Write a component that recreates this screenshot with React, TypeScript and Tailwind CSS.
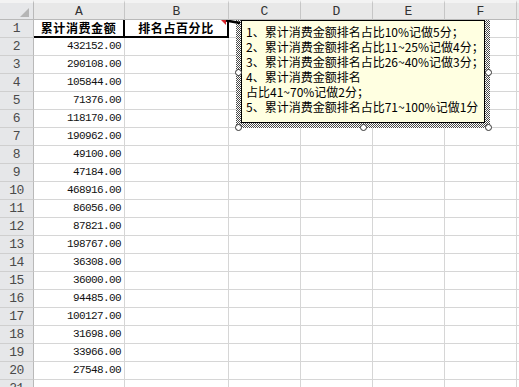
import React from "react";

const nums = [
  "432152.00",
  "290108.00",
  "105844.00",
  "71376.00",
  "118170.00",
  "190962.00",
  "49100.00",
  "47184.00",
  "468916.00",
  "86056.00",
  "87821.00",
  "198767.00",
  "36308.00",
  "36000.00",
  "94485.00",
  "100127.00",
  "31698.00",
  "33966.00",
  "27548.00",
];

const lines = [
  "1、累计消费金额排名占比10%记做5分；",
  "2、累计消费金额排名占比11~25%记做4分；",
  "3、累计消费金额排名占比26~40%记做3分；",
  "4、累计消费金额排名",
  "占比41~70%记做2分；",
  "5、累计消费金额排名占比71~100%记做1分",
];

const colLetters = ["A", "B", "C", "D", "E", "F", ""];

function RowHead({ n }: { n: number }) {
  return (
    <div className="flex items-center justify-center border-r border-b border-r-[#b9b9b9] border-b-[#cfcfcf] bg-[#e6e7e9] font-['Liberation_Mono',monospace] text-[13px] text-[#4a4a4a] tracking-[-0.5px]">
      {n}
    </div>
  );
}

function Cell({ children }: { children?: React.ReactNode }) {
  return (
    <div className="flex items-center justify-end border-r border-b border-[#d6d6d6] pr-[3px] font-['Liberation_Mono',monospace] text-[11px] tracking-[-0.6px] text-[#111]">
      {children}
    </div>
  );
}

export default function App() {
  const rows = [];
  for (let r = 2; r <= 21; r++) {
    rows.push(
      <React.Fragment key={r}>
        <RowHead n={r} />
        <Cell>{nums[r - 2]}</Cell>
        <Cell />
        <Cell />
        <Cell />
        <Cell />
        <Cell />
        <Cell />
      </React.Fragment>
    );
  }

  return (
    <div className="relative h-[387px] w-[519px] overflow-hidden bg-white">
      <div className="grid grid-cols-[34px_91px_104px_72px_72px_72px_72px_72px] grid-rows-[20px_repeat(21,18px)]">
        {/* corner */}
        <div className="relative z-10 border-r border-b border-r-[#b9b9b9] border-b-[#b9b9b9] bg-[#e6e7e9] border-t-[3px] border-t-[#f3f3f3]">
          <svg className="absolute left-0 top-0" width="34" height="17" viewBox="0 0 34 17">
            <polygon points="29,5 29,14 20,14" fill="#b5b5b5" />
          </svg>
        </div>
        {colLetters.map((c, i) => (
          <div
            key={i}
            className="relative z-10 flex items-center justify-center border-r border-b border-r-[#c6c6c6] border-b-[#b9b9b9] border-t-[3px] border-t-[#f3f3f3] bg-[#e8e8e8] font-['Liberation_Mono',monospace] text-[13px] text-[#333] pt-[1px]"
          >
            {c}
          </div>
        ))}

        {/* row 1 */}
        <RowHead n={1} />
        <div className="flex items-center justify-center border-r-2 border-b-2 border-black pb-[1px] font-['Noto_Sans_CJK_SC',sans-serif] text-[12px] font-bold leading-none tracking-[0.6px] text-black">
          累计消费金额
        </div>
        <div className="flex items-center justify-center border-r-2 border-b-2 border-black pb-[1px] font-['Noto_Sans_CJK_SC',sans-serif] text-[12px] font-bold leading-none tracking-[0.6px] text-black">
          排名占百分比
        </div>
        <Cell />
        <Cell />
        <Cell />
        <Cell />
        <Cell />

        {rows}
      </div>

      {/* comment indicator + leader */}
      <svg className="absolute left-0 top-0 z-[6]" width="260" height="40" viewBox="0 0 260 40">
        <polygon points="221,20 226,20 226,25" fill="#d9232b" />
        <line x1="226" y1="20.5" x2="240" y2="23" stroke="#000" strokeWidth="2.5" />
      </svg>

      {/* comment box */}
      <div className="absolute left-[236px] top-[15px] z-[5] h-[113px] w-[254px] bg-[image:repeating-conic-gradient(#4a4a4a_0%_25%,#ffffff_0%_50%)] bg-[length:2px_2px] px-[5px] pt-[5px] pb-[5px]">
        <div className="h-full w-full border border-black bg-[#ffffe1] pl-[4px] pt-[3px] font-['Noto_Sans_CJK_SC',sans-serif] text-[12px] leading-[15px] text-black whitespace-nowrap">
          {lines.map((l, i) => (
            <div key={i}>{l}</div>
          ))}
        </div>
      </div>

      {/* handles */}
      <div className="absolute left-[235px] top-[69px] z-[6] h-[7px] w-[7px] rounded-full border border-[#333] bg-white" />
      <div className="absolute left-[485px] top-[69px] z-[6] h-[7px] w-[7px] rounded-full border border-[#333] bg-white" />
      <div className="absolute left-[235px] top-[124px] z-[6] h-[7px] w-[7px] rounded-full border border-[#333] bg-white" />
      <div className="absolute left-[360px] top-[124px] z-[6] h-[7px] w-[7px] rounded-full border border-[#333] bg-white" />
      <div className="absolute left-[485px] top-[124px] z-[6] h-[7px] w-[7px] rounded-full border border-[#333] bg-white" />
    </div>
  );
}
